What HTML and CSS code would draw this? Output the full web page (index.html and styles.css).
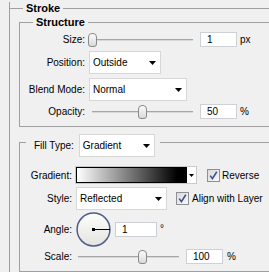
FILE: index.html
```html
<!DOCTYPE html>
<html lang="en">
<head>
  <meta charset="UTF-8">
  <meta name="viewport" content="width=device-width, initial-scale=1">
  <title>Layer Style - Stroke</title>
  <link rel="stylesheet" href="styles.css">
</head>
<body>

<section class="panel">
  <div class="panel-head">
    <span class="rule rule-start"></span>
    <span class="panel-title">Stroke</span>
    <span class="rule"></span>
  </div>

  <fieldset class="group group-structure">
    <legend class="group-title">Structure</legend>

    <div class="row row-size">
      <span class="label">Size:</span>
      <div class="slider"><div class="track"></div><div class="thumb" style="--value: 0"></div></div>
      <div class="field">1</div>
      <span class="unit">px</span>
    </div>

    <div class="row row-position">
      <span class="label">Position:</span>
      <div class="select select-position">
        <span class="select-text">Outside</span>
        <svg class="arrow" width="7" height="4" viewBox="0 0 7 4"><polygon points="0,0 7,0 3.5,4" fill="#000"/></svg>
      </div>
    </div>

    <div class="row row-blend">
      <span class="label">Blend Mode:</span>
      <div class="select select-blend">
        <span class="select-text">Normal</span>
        <svg class="arrow" width="7" height="4" viewBox="0 0 7 4"><polygon points="0,0 7,0 3.5,4" fill="#000"/></svg>
      </div>
    </div>

    <div class="row row-opacity">
      <span class="label">Opacity:</span>
      <div class="slider"><div class="track"></div><div class="thumb" style="--value: 0.5"></div></div>
      <div class="field">50</div>
      <span class="unit">%</span>
    </div>
  </fieldset>

  <fieldset class="group group-fill">
    <legend class="fill-legend">
      <div class="fill-head">
        <span>Fill Type:</span>
        <div class="select select-fill">
          <span class="select-text">Gradient</span>
          <svg class="arrow" width="7" height="4" viewBox="0 0 7 4"><polygon points="0,0 7,0 3.5,4" fill="#000"/></svg>
        </div>
      </div>
    </legend>

    <div class="row row-gradient">
      <span class="label">Gradient:</span>
      <div class="gradient">
        <div class="gradient-swatch"></div>
        <div class="gradient-arrow">
          <svg width="5" height="3" viewBox="0 0 5 3"><polygon points="0,0 5,0 2.5,3" fill="#000"/></svg>
        </div>
      </div>
      <svg class="check check-reverse" width="13" height="13" viewBox="0 0 13 13">
        <defs><linearGradient id="cb1" x1="0" y1="0" x2="1" y2="1"><stop offset="0" stop-color="#d8d8d8"/><stop offset="1" stop-color="#fbfbfb"/></linearGradient></defs>
        <rect x="0.5" y="0.5" width="12" height="12" fill="url(#cb1)" stroke="#8f9091"/>
        <path d="M3.2 6.6 5.4 9.6 9.8 2.8" fill="none" stroke="#3d4f8e" stroke-width="1.6"/>
      </svg>
      <span class="check-text">Reverse</span>
    </div>

    <div class="row row-style">
      <span class="label">Style:</span>
      <div class="select select-style">
        <span class="select-text">Reflected</span>
        <svg class="arrow" width="7" height="4" viewBox="0 0 7 4"><polygon points="0,0 7,0 3.5,4" fill="#000"/></svg>
      </div>
      <svg class="check check-align" width="13" height="13" viewBox="0 0 13 13">
        <defs><linearGradient id="cb2" x1="0" y1="0" x2="1" y2="1"><stop offset="0" stop-color="#d8d8d8"/><stop offset="1" stop-color="#fbfbfb"/></linearGradient></defs>
        <rect x="0.5" y="0.5" width="12" height="12" fill="url(#cb2)" stroke="#8f9091"/>
        <path d="M3.2 6.6 5.4 9.6 9.8 2.8" fill="none" stroke="#3d4f8e" stroke-width="1.6"/>
      </svg>
      <span class="check-text">Align with Layer</span>
    </div>

    <div class="row row-angle">
      <span class="label">Angle:</span>
      <svg class="dial" width="35" height="35" viewBox="0 0 35 35">
        <defs><linearGradient id="dialFill" x1="0" y1="0" x2="0" y2="1"><stop offset="0" stop-color="#fdfdfb"/><stop offset="1" stop-color="#e4e4df"/></linearGradient></defs>
        <circle cx="17.5" cy="17.5" r="16.4" fill="url(#dialFill)" stroke="#4f5e88" stroke-width="1.5"/>
        <line x1="17.5" y1="17.5" x2="34" y2="17.5" stroke="#000" stroke-width="1"/>
        <rect x="16" y="16" width="3" height="3" fill="#000"/>
      </svg>
      <div class="field field-angle">1</div>
      <span class="unit unit-degree">°</span>
    </div>

    <div class="row row-scale">
      <span class="label">Scale:</span>
      <div class="slider slider-scale"><div class="track"></div><div class="thumb" style="--value: 0.64"></div></div>
      <div class="field">100</div>
      <span class="unit unit-scale">%</span>
    </div>
  </fieldset>
</section>

</body>
</html>
```

FILE: styles.css
```css
html, body {
  margin: 0;
  height: 100%;
  overflow: hidden;
}

body {
  background: #f0f0f0;
  font-family: "Liberation Sans", Arial, sans-serif;
  font-size: 10px;
  color: #000;
}

/* outer panel */
.panel {
  margin: 8px 0 0 9px;
  padding-left: 9px;
  border-left: 1px solid #a0a0a0;
}

.panel-head {
  display: flex;
  align-items: center;
  height: 13px;
  margin: -6px 0 0 -10px;
}

.rule {
  flex: 1;
  border-top: 1px solid #a0a0a0;
}

.rule-start {
  flex: none;
  width: 14px;
}

.panel-title {
  padding: 0 3px;
  font-weight: bold;
  font-size: 11px;
  line-height: 13px;
}

/* group boxes */
.group {
  min-inline-size: 0;
  border: 1px solid #a0a0a0;
  border-right: none;
  margin: 0;
  padding: 0;
}

.group-title {
  padding: 0 3px;
  font-weight: bold;
  font-size: 11px;
  line-height: 13px;
  margin-left: 13px;
}

.group-structure {
  margin-top: 1px;
  padding: 3px 0 7px;
}

.group-fill {
  margin-top: 1px;
  padding: 10px 0 7px;
}

.fill-legend {
  margin-left: 6px;
  padding: 6px 5px 0 8px;
}

.fill-head {
  display: flex;
  align-items: center;
}

.fill-head .select {
  margin-left: 5px;
}

/* rows */
.row {
  display: flex;
  align-items: center;
}

.label {
  flex: none;
  text-align: right;
  margin-right: 3px;
}

.group-structure .label {
  width: 65px;
}

.group-fill .label {
  width: 52px;
}

.row-size { height: 15px; }
.row-position { height: 23px; margin-top: 4px; }
.row-blend { height: 23px; margin-top: 4px; }
.row-opacity { height: 15px; margin-top: 3px; }

.row-gradient { height: 16px; }
.row-style { height: 23px; margin-top: 4px; }
.row-angle { height: 35px; margin-top: 2px; }
.row-scale { height: 15px; margin-top: 2px; }

/* slider */
.slider {
  position: relative;
  flex: none;
  width: 109px;
  height: 14px;
  display: flex;
  align-items: center;
  padding: 0 4px;
  box-sizing: border-box;
}

.slider-scale {
  margin-left: -1px;
}

.track {
  flex: 1;
  height: 0;
  border-top: 1px solid #a6a6a6;
  border-bottom: 1px solid #d8d8d8;
}

.thumb {
  position: absolute;
  top: 0;
  left: calc((100% - 9px) * var(--value));
  width: 9px;
  height: 14px;
  box-sizing: border-box;
  border: 1px solid #8a8a8a;
  border-radius: 4px 4px 3px 3px;
  background: linear-gradient(#fbfbfb, #d9d9d9);
}

/* text fields */
.field {
  flex: none;
  width: 37px;
  height: 15px;
  box-sizing: border-box;
  margin-left: 3px;
  padding-left: 6px;
  border: 1px solid #cdd0d5;
  background: #fff;
  line-height: 13px;
}

.field-angle {
  width: 42px;
  margin-left: 4px;
}

.unit {
  margin-left: 3px;
}

.unit-degree {
  margin-bottom: 2px;
}

.unit-scale {
  margin-left: 4px;
}

/* combo boxes */
.select {
  flex: none;
  display: flex;
  align-items: center;
  height: 23px;
  box-sizing: border-box;
  margin-left: 1px;
  padding: 0 4px 0 3px;
  border: 1px solid #d7d7d7;
  background: #fff;
}

.select-text {
  flex: 1;
}

.select-position { width: 72px; }
.select-blend { width: 98px; }
.select-fill { width: 76px; }
.select-style { width: 91px; }

/* gradient picker */
.gradient {
  flex: none;
  display: flex;
  width: 122px;
  height: 18px;
  box-sizing: border-box;
  border: 1px solid #c9c9c9;
  background: #fff;
}

.gradient-swatch {
  flex: 1;
  border: 1px solid #000;
  background: linear-gradient(to right, #fff, #000 92%);
}

.gradient-arrow {
  width: 9px;
  display: flex;
  align-items: center;
  justify-content: center;
}

/* checkboxes */
.check { flex: none; }
.check-reverse { margin-left: 10px; }
.check-align { margin-left: 9px; }

.check-text {
  margin-left: 2px;
  white-space: nowrap;
}

.check-align + .check-text {
  margin-left: 3px;
}

.dial {
  flex: none;
  margin-left: 1px;
}
```
